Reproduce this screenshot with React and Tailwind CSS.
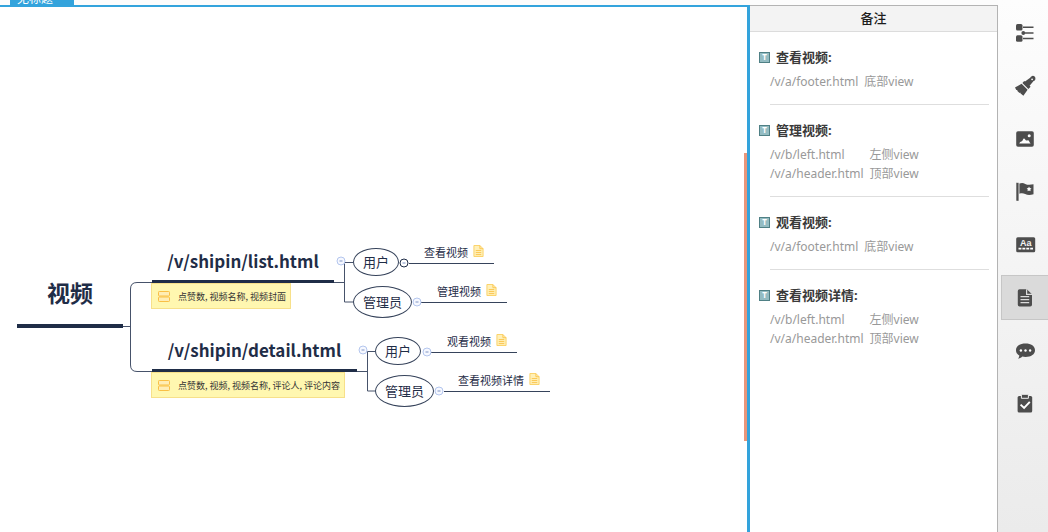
import React, { useState } from "react";

const topics = [
 { id: "list", title: "/v/shipin/list.html", label: "点赞数, 视频名称, 视频封面", x: 152, y: 273, width: 182 },
 { id: "detail", title: "/v/shipin/detail.html", label: "点赞数, 视频, 视频名称, 评论人, 评论内容", x: 152, y: 362, width: 205 },
];

const roles = [
 { id: "u1", name: "用户", x: 353, y: 241, width: 46, height: 28 },
 { id: "a1", name: "管理员", x: 353, y: 279, width: 59, height: 32 },
 { id: "u2", name: "用户", x: 375, y: 330, width: 46, height: 28 },
 { id: "a2", name: "管理员", x: 375, y: 368, width: 59, height: 32 },
];

// x and y are the left end of the underline
const leaves = [
 { id: "l1", name: "查看视频", x: 409, y: 256, width: 85 },
 { id: "l2", name: "管理视频", x: 421, y: 295, width: 86 },
 { id: "l3", name: "观看视频", x: 431, y: 345, width: 86 },
 { id: "l4", name: "查看视频详情", x: 444, y: 384, width: 106 },
];

const toggles = [
 { x: 341, y: 254 },
 { x: 404, y: 256, dark: true },
 { x: 417, y: 295 },
 { x: 363, y: 343 },
 { x: 427, y: 345 },
 { x: 439, y: 384 },
];

const notes = [
 { title: "查看视频:", rows: [["/v/a/footer.html", "底部view"]] },
 { title: "管理视频:", rows: [["/v/b/left.html", "左侧view"], ["/v/a/header.html", "顶部view"]] },
 { title: "观看视频:", rows: [["/v/a/footer.html", "底部view"]] },
 { title: "查看视频详情:", rows: [["/v/b/left.html", "左侧view"], ["/v/a/header.html", "顶部view"]] },
];

const tools = [
 {
  name: "大纲",
  icon: (
   <>
    <rect x="1" y="1" width="6.5" height="6.5" rx="1.5" />
    <rect x="1" y="12.2" width="6.5" height="6.5" rx="1.5" />
    <circle cx="8.3" cy="10" r="1.9" />
    <path d="M8 3.5h10.5v1.4H8zM10 9.3h8.5v1.4H10zM8 14.8h10.5v1.4H8z" />
   </>
  ),
 },
 {
  name: "格式",
  icon: (
   <>
    <path d="M10 5.6 15.2 1.7a2.7 2.7 0 1 1 3.4 3.4L14.6 9.8l1 1-2.200 2.200L7.400 7.100l1.800-2.200z" />
    <path d="M6.600 7.800 12.600 13.800 8.400 19.800 5.600 17.600 5.200 16.600 4.500 16.900 2.400 14.900 2.300 13.900 1.300 14 0 11.600z" />
    <circle cx="17.1" cy="3.3" r=".9" fill="#f8f8f8" />
   </>
  ),
 },
 {
  name: "图片",
  icon: (
   <>
    <rect x="1.2" y="2.2" width="17.6" height="15.6" rx="1.8" />
    <circle cx="14.2" cy="6.7" r="1.5" fill="#fff" />
    <path d="M4.3 14.4c1-1.9 1.8-1.4 2.6-2.1.7-.7 1.3-2.9 2.1-2.9s1.6 2.1 2.4 2.1 1.2-.6 1.9-.2c.8.4 1 2 2.3 3.1z" fill="#fff" />
   </>
  ),
 },
 {
  name: "标记",
  icon: (
   <>
    <path d="M1.3.8h2.3v18H1.3z" />
    <path d="M4.4 1.6c2.2-1 4.1-.7 5.8.3 2.5 1.3 5.2 1 8.3.4v10c-3.3 1-6 1-8.3-.2-2-1-3.7-1-5.8-.4z" />
    <path d="m14 4.6.8 1.5 1.7.3-1.2 1.2.3 1.7-1.6-.8-1.5.8.3-1.7-1.2-1.2 1.7-.3z" fill="#fff" />
   </>
  ),
 },
 {
  name: "标签",
  icon: (
   <>
    <rect x="1.2" y="2.3" width="19" height="15" rx="1.5" />
    <text x="10.7" y="10.8" fontSize="9" fontWeight="700" textAnchor="middle" fill="#f4f4f4" fontFamily="Liberation Sans, sans-serif">Aa</text>
    <path d="M3.5 13.6H18" stroke="#fff" strokeWidth="1.8" strokeDasharray="2.9 1" />
   </>
  ),
 },
 {
  name: "备注",
  icon: (
   <>
    <path d="M4.6 1.2h7.2l5.2 5v10.6a1.8 1.8 0 0 1-1.8 1.8H4.6a1.8 1.8 0 0 1-1.8-1.8V3a1.8 1.8 0 0 1 1.8-1.8z" />
    <path d="M11.6 1.2v5.2H17M5.5 8.6h8.7M5.5 11.6h8.7M5.5 14.6h8.7" fill="none" stroke="#dcdcdc" strokeWidth="1.2" />
   </>
  ),
 },
 {
  name: "评论",
  icon: (
   <>
    <path d="M10.5 2.5c5.6 0 9.5 2.7 9.5 6.7s-3.9 6.7-9.5 6.7c-1.2 0-2.2-.1-3.2-.3-.9 1-2.1 1.8-4.3 2.2.8-1 1.3-2 1.3-3.2C2.2 13.400 1 11.500 1 9.200c0-4 3.900-6.700 9.500-6.700z" />
    <g fill="#fff">
     <circle cx="5.9" cy="9.5" r="1.2" />
     <circle cx="10.5" cy="9.5" r="1.2" />
     <circle cx="15.1" cy="9.5" r="1.2" />
    </g>
   </>
  ),
 },
 {
  name: "任务",
  icon: (
   <>
    <rect x="2.6" y="2" width="14.6" height="16.500" rx="1.5" />
    <path d="M6.400.3h7v4h-7z" stroke="#efefef" strokeWidth="1" />
    <path d="m5.6 10.600 3.500 3.400 5.700-6.200" fill="none" stroke="#fff" strokeWidth="1.9" />
   </>
  ),
 },
];

function NoteIcon() {
 return (
  <svg viewBox="0 0 12 14" className="h-[14px] w-[11px]">
   <path d="M1 1h6.500L11 4.500V13H1z" fill="#fff0b8" stroke="#fbd062" />
   <path d="M7.500 1v3.500H11M3 6.500h6M3 8.700h6M3 10.900h6" fill="none" stroke="#fbc44c" />
  </svg>
 );
}

function Links() {
 return (
  <svg className="absolute left-0 top-0 h-[420px] w-[600px]" fill="none" stroke="#46526a" strokeWidth="1">
   <path d="M123 319.500h7.500M152 275.500h-15q-6.500 0-6.500 6.500v76q0 6.500 6.500 6.500h15" />
   <path d="M334 275.500h11M353 255.500h-8.500v39.500h9" />
   <path d="M357 364.500h10M375 344.500h-7.500v39.500h8" />
  </svg>
 );
}

function MindMap() {
 return (
  <div className="absolute inset-0 text-[#1f2d47]">
   <Links />
   <h1 className="absolute left-[17px] top-[268px] w-[106px] border-b-4 border-[#1f2d47] pb-[14px] text-center text-[23px] leading-[35px] font-bold">
    视频
   </h1>
   {topics.map((topic) => (
    <div key={topic.id} className="absolute" style={{ left: topic.x, top: topic.y - 36, width: topic.width }}>
     <h2 className="h-[39px] border-b-3 border-[#1f2d47] pt-[3px] text-center text-[17px] leading-7 font-bold whitespace-nowrap">
      {topic.title}
     </h2>
     <div className="-ml-px flex h-[26px] w-max items-center gap-2 border border-[#f7e08a] bg-[#fff7b0] pt-px pr-1 pl-[6px] text-[9px] text-[#333]">
      <svg viewBox="0 0 12 11" className="h-[11px] w-3" fill="#ffedb5" stroke="#f9bf45">
       <rect x=".5" y=".5" width="11" height="4.5" rx=".8" />
       <rect x=".5" y="6" width="11" height="4.5" rx=".8" />
      </svg>
      {topic.label}
     </div>
    </div>
   ))}
   {roles.map((role) => (
    <div
     key={role.id}
     className="absolute flex items-center justify-center rounded-[50%] border border-[#36435b] bg-white text-[13px]"
     style={{ left: role.x, top: role.y, width: role.width, height: role.height }}
    >
     {role.name}
    </div>
   ))}
   {leaves.map((leaf) => (
    <div
     key={leaf.id}
     className="absolute flex h-5 items-start justify-end gap-[5px] border-b border-[#36435b] pr-[10px] text-[11px] leading-4"
     style={{ left: leaf.x, top: leaf.y - 19, width: leaf.width }}
    >
     {leaf.name}
     <NoteIcon />
    </div>
   ))}
   {toggles.map((t) => (
    <button
     key={t.x}
     aria-label="折叠"
     className={
      t.dark
       ? "absolute flex size-[9px] -translate-1/2 items-center justify-center rounded-full border border-[#1f2d47] bg-white"
       : "absolute flex size-[9px] -translate-1/2 items-center justify-center rounded-full border border-[#b4c6ee] bg-[#f6f8ff]"
     }
     style={{ left: t.x, top: t.y }}
    >
     <span className="h-px w-[3px] bg-[#7f93c4]" />
    </button>
   ))}
  </div>
 );
}

function NotesPanel() {
 return (
  <aside className="mt-[5px] w-[248px] shrink-0 border-t border-r border-[#b3b3b3] bg-white">
   <h2 className="border-b border-[#dcdcdc] bg-[#f3f3f3] pb-0.5 text-center text-[13px] leading-[23px] font-medium text-[#1c1c1c]">备注</h2>
   <div className="pr-2 pl-[9px] font-['Noto_Sans','Noto_Sans_CJK_SC',sans-serif]">
    {notes.map((note) => (
     <section key={note.title} className="group pt-4">
      <h3 className="flex items-center gap-1.5 text-[13px] leading-[18px] font-bold text-[#3a3a3a]">
       <span className="flex size-[11px] items-center justify-center border border-[#4f8085] bg-[#94bcc2] text-[8px] leading-none text-white">
        T
       </span>
       {note.title}
      </h3>
      <table className="mt-1.5 ml-[11px] text-xs text-[#999]">
       <tbody>
        {note.rows.map((row) => (
         <tr key={row[0]}>
          <td className="p-0 pr-1.5 leading-[19px]">{row[0]}</td>
          <td className="p-0 leading-[19px]">{row[1]}</td>
         </tr>
        ))}
       </tbody>
      </table>
      <div className="mt-[13px] ml-[11px] border-b border-[#dedede] group-last:hidden" />
     </section>
    ))}
   </div>
  </aside>
 );
}

function Toolbar() {
 const [active, setActive] = useState("备注");
 return (
  <nav className="flex w-[50px] shrink-0 flex-col gap-2 bg-linear-to-b from-[#fdfdfd] to-[#ebebeb] pt-[10px] pl-[3px]">
   {tools.map((tool) => (
    <button
     key={tool.name}
     aria-label={tool.name}
     onClick={() => setActive(tool.name)}
     className={
      tool.name === active
       ? "flex h-[45px] items-center justify-center border border-r-0 border-[#c6c6c6] bg-[#dadada]"
       : "flex h-[45px] items-center justify-center border border-r-0 border-transparent"
     }
    >
     <svg viewBox="0 0 20 20" className="size-5 overflow-visible" fill="#4d4d4d">
      {tool.icon}
     </svg>
    </button>
   ))}
  </nav>
 );
}

function App() {
 return (
  <div className="flex h-screen overflow-hidden bg-[#fcfcfc] font-['Noto_Sans_CJK_SC',sans-serif]">
   <main className="flex min-w-0 flex-1 flex-col">
    <div className="flex h-[5px] shrink-0 items-end overflow-hidden pl-[10px]">
     <button className="h-5 w-16 bg-[#33a3dc] pt-1.5 pl-[7px] text-left text-xs leading-3 text-white">无标题</button>
    </div>
    <div className="relative flex-1 overflow-hidden border-t-2 border-r-3 border-[#33a3dc] bg-white">
     <MindMap />
     <div className="absolute top-[146px] right-0 h-72 w-[3px] bg-[#e9967a]" />
    </div>
   </main>
   <NotesPanel />
   <Toolbar />
  </div>
 );
}

export default App;
